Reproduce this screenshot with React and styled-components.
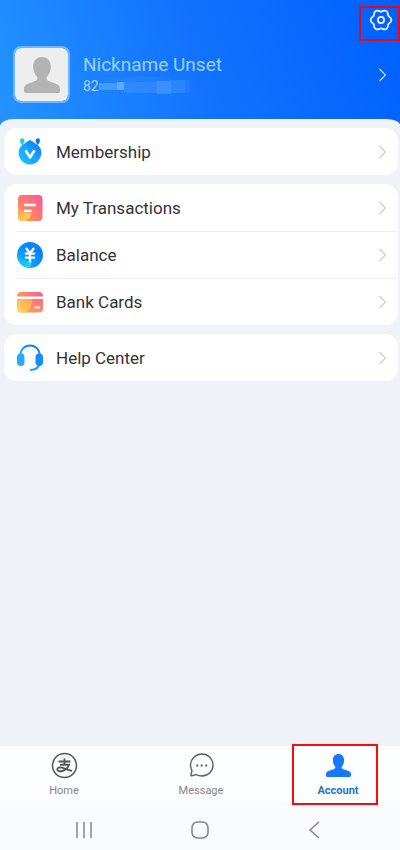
import * as React from "react";
import styled, { createGlobalStyle } from "styled-components";

const GlobalStyle = createGlobalStyle`
  * {
    box-sizing: border-box;
  }

  body {
    margin: 0;
    background: #eff3f8;
    font-family: Roboto, "Noto Sans", sans-serif;
  }

  button {
    border: 0;
    padding: 0;
    background: none;
    font-family: inherit;
    cursor: pointer;
  }

  svg {
    display: block;
    flex: none;
  }
`;

const Page = styled.div`
  display: flex;
  flex-direction: column;
  min-height: 100vh;
`;

const Header = styled.header`
  padding-bottom: 32px;
  background: linear-gradient(70deg, #2494ff 0%, #1272ff 50%, #0060ff 100%);
`;

const TopBar = styled.div`
  display: flex;
  justify-content: flex-end;
  height: 46px;
  padding: 8px 7px 0 0;
`;

const SettingsButton = styled.button`
  position: relative;
  width: 24px;
  height: 24px;
`;

const Callout = styled.span`
  position: absolute;
  border: 2px solid ${(props) => props.$color};
  pointer-events: none;
`;

const SettingsCallout = styled(Callout)`
  inset: -2px -7px -9px -10px;
`;

const TabCallout = styled(Callout)`
  inset: -2px 5px -2px -1px;
`;

const Profile = styled.button`
  display: flex;
  align-items: center;
  width: 100%;
  padding: 0 12px 0 13px;
  text-align: left;
`;

const Avatar = styled.span`
  display: flex;
  align-items: center;
  justify-content: center;
  width: 57px;
  height: 57px;
  border: 2px solid #70b7ff;
  border-radius: 8px;
  background: #eeeeee;
  background-clip: padding-box;
`;

const ProfileText = styled.span`
  display: flex;
  flex: 1;
  flex-direction: column;
  margin-left: 13px;
  padding-bottom: 2px;
`;

const Nickname = styled.span`
  font-size: 19px;
  line-height: 24px;
  color: #9dcfff;
`;

const Phone = styled.span`
  display: flex;
  align-items: center;
  font-size: 14px;
  line-height: 18px;
  color: #a8d3ff;
`;

const Panel = styled.main`
  display: flex;
  flex: 1;
  flex-direction: column;
  gap: 9px;
  margin-top: -16px;
  padding: 9px 2px 9px 4px;
  border-radius: 14px 14px 0 0 / 8px 6px 0 0;
  background: #eff3f8;
`;

const Card = styled.section`
  border-radius: 13px;
  background: #ffffff;
`;

const Row = styled.button`
  display: flex;
  align-items: center;
  width: 100%;
  height: 47px;
  padding: 0 10px 0 12px;
`;

const Divider = styled.hr`
  height: 1px;
  margin: 0 0 -1px 13px;
  border: 0;
  background: #eeeff1;
`;

const RowLabel = styled.span`
  flex: 1;
  margin-left: 12px;
  font-size: 17px;
  line-height: 24px;
  text-align: left;
  color: #333333;
`;

const TabBar = styled.nav`
  display: flex;
  justify-content: space-between;
  padding: 0 17px 0 19px;
  background: #fcfdff;
`;

const Tab = styled.button`
  position: relative;
  display: flex;
  flex-direction: column;
  align-items: center;
  gap: 4px;
  width: 90px;
  height: 57px;
  padding-top: 6px;
  font-size: 11px;
  font-weight: ${(props) => (props.$active ? 700 : 400)};
  line-height: 16px;
  color: ${(props) => (props.$active ? "#1b78c4" : "#858585")};
`;

const SystemBar = styled.div`
  display: flex;
  align-items: center;
  justify-content: space-between;
  height: 47px;
  padding: 6px 73px 0 72px;
  background: #f9fbff;
`;

const SystemButton = styled.button`
  width: 24px;
  height: 24px;
`;

function GearIcon() {
  return (
    <svg width="24" height="24" viewBox="0 0 24 24" fill="none" stroke="#eaf4ff" strokeWidth="1.8" strokeLinejoin="round">
      <path d="M22.4 12C22.4 9.400 20 9 19.300 7.800C18.600 6.600 19.600 4.300 17.300 3C15 1.700 13.400 3.600 12 3.600C10.600 3.600 9 1.700 6.700 3C4.400 4.300 5.400 6.600 4.700 7.800C4 9 1.600 9.400 1.600 12C1.600 14.600 4 15 4.700 16.200C5.400 17.400 4.400 19.700 6.700 21C9 22.300 10.600 20.400 12 20.400C13.400 20.400 15 22.300 17.300 21C19.600 19.700 18.600 17.400 19.300 16.200C20 15 22.400 14.600 22.400 12z" />
      <circle cx="12" cy="12" r="3.100" />
    </svg>
  );
}

function Chevron({ color }) {
  return (
    <svg width="10" height="14" viewBox="0 0 10 14" fill="none" stroke={color} strokeWidth="1.100">
      <path d="M1.500 1l6 6-6 6" />
    </svg>
  );
}

function Person({ color, width, height }) {
  return (
    <svg width={width} height={height} viewBox="0 0 36 36" preserveAspectRatio="none" fill={color}>
      <path d="M18 0c5.300 0 8.800 4 8.800 9.600 0 5.200-2.200 8.200-3.900 10.400-1 1.400-.2 3 1.300 3.800l8.100 3.300c2.600 1.100 3.700 2.400 3.700 4.600v2.600c0 1-.7 1.700-1.700 1.700H1.700C.7 36 0 35.300 0 34.300v-2.600c0-2.200 1.100-3.500 3.700-4.600l8.100-3.300c1.500-.8 2.300-2.400 1.300-3.800-1.700-2.200-3.900-5.200-3.900-10.400C9.200 4 12.700 0 18 0z" />
    </svg>
  );
}

// masked digits of the phone number
function MaskedDigits() {
  return (
    <svg width="92" height="18" viewBox="0 0 92 18">
      <path d="M0 6h18v7H0z" fill="#58a6ff" opacity=".7" />
      <path d="M18 5h7v8h-7z" fill="#7ebaff" opacity=".7" />
      <path d="M7 0h65v5H7z" fill="#2f8aff" opacity=".35" />
      <path d="M25 5h33v11H25z" fill="#4495ff" opacity=".5" />
      <path d="M58 4h14v13H58z" fill="#55a0ff" opacity=".6" />
      <path d="M72 3h14v13H72z" fill="#3e91ff" opacity=".55" />
      <path d="M86 3h5v13h-5z" fill="#2e86ff" opacity=".4" />
    </svg>
  );
}

function MembershipIcon() {
  return (
    <svg width="28" height="28" viewBox="0 0 28 28">
      <defs>
        <linearGradient id="member" x1="0" y1="1" x2="1" y2="0">
          <stop offset="0" stopColor="#14c8ff" />
          <stop offset=".5" stopColor="#16a4ff" />
          <stop offset="1" stopColor="#0875fa" />
        </linearGradient>
      </defs>
      <path d="M7.200 8C3.600 6.500 3 .300 6 .300c3.200 0 3 3.500 1.500 5z" fill="#1ccdf8" />
      <path d="M20.800 7c3.600-1 4.200-6.700 1.400-6.700-3 0-3.200 3-1.600 4.500z" fill="#0878ed" />
      <path d="M14 2c2.600 1.300 4.500 2.900 6.500 4.200 3 2 4.900 4.600 4.900 8.300 0 6.500-5.100 12-11.400 12S2.600 21 2.600 14.500c0-3.700 1.900-6.300 4.900-8.300C9.500 4.900 11.400 3.300 14 2z" fill="url(#member)" />
      <path d="M10 13l4 6.500 4-6.500" fill="none" stroke="#fff" strokeWidth="2.600" strokeLinecap="round" strokeLinejoin="round" />
    </svg>
  );
}

function TransactionsIcon() {
  return (
    <svg width="28" height="28" viewBox="0 0 28 28">
      <defs>
        <linearGradient id="bill" x1="0" y1="1" x2="1" y2="0">
          <stop offset="0" stopColor="#ffa445" />
          <stop offset=".5" stopColor="#ff7974" />
          <stop offset="1" stopColor="#ff5796" />
        </linearGradient>
        <linearGradient id="billCorner" x1="0" y1="0" x2="1" y2="1">
          <stop offset="0" stopColor="#ff9a58" />
          <stop offset="1" stopColor="#ffe052" />
        </linearGradient>
      </defs>
      <rect x="2" y="1" width="24.500" height="26" rx="4" fill="url(#bill)" />
      <path d="M2 13c2 4 8 7 13.500 6.500C14 24 11 27 8 27H6c-2.200 0-4-1.800-4-4z" fill="url(#billCorner)" />
      <path d="M9 11h10M9 17h5.500" stroke="#fff" strokeWidth="2.400" strokeLinecap="round" />
    </svg>
  );
}

function BalanceIcon() {
  return (
    <svg width="28" height="28" viewBox="0 0 28 28">
      <defs>
        <linearGradient id="coin" x1="0" y1="1" x2="1" y2="0">
          <stop offset="0" stopColor="#14b6ff" />
          <stop offset=".6" stopColor="#0c88fe" />
          <stop offset="1" stopColor="#0878fa" />
        </linearGradient>
        <linearGradient id="coinEdge" x1="0" y1="0" x2="1" y2="1">
          <stop offset="0" stopColor="#10a3ff" />
          <stop offset="1" stopColor="#1bdcff" />
        </linearGradient>
      </defs>
      <circle cx="14" cy="14" r="13" fill="url(#coin)" />
      <path d="M1.200 12C4 17 9 20.500 16 20c-.3 3-1 5-2.500 7C6 26.800.7 20.500 1.200 12z" fill="url(#coinEdge)" />
      <path d="M10.500 7.700l3.500 4.500 3.500-4.500M14 12.200v8.300M9.800 12.600h8.400M9.800 16.600h8.400" fill="none" stroke="#fff" strokeWidth="2.300" strokeLinecap="round" />
    </svg>
  );
}

function BankCardIcon() {
  return (
    <svg width="28" height="28" viewBox="0 0 28 28">
      <defs>
        <linearGradient id="cardTop" x1="0" y1="0" x2="1" y2="0">
          <stop offset="0" stopColor="#ff9660" />
          <stop offset="1" stopColor="#f95c8c" />
        </linearGradient>
        <linearGradient id="cardBody" x1="0" y1="1" x2="1" y2="0">
          <stop offset="0" stopColor="#ffac4b" />
          <stop offset="1" stopColor="#ff6a82" />
        </linearGradient>
        <linearGradient id="cardShine" x1="0" y1="1" x2="1" y2="0">
          <stop offset="0" stopColor="#ffe14c" />
          <stop offset="1" stopColor="#ff9a5e" />
        </linearGradient>
      </defs>
      <path d="M1 8.500C1 5.500 2.500 4 5 4h18c2.500 0 4 1.500 4 4.500z" fill="url(#cardTop)" />
      <path d="M1 11h26v9.500c0 2.500-1.500 4-4 4H5c-2.500 0-4-1.500-4-4z" fill="url(#cardBody)" />
      <path d="M1 11h15.500c-1 6.500-3 11-7 13.500H5c-2.500 0-4-1.500-4-4z" fill="url(#cardShine)" />
      <path d="M19.500 19.500H23" stroke="#fff" strokeWidth="2.200" strokeLinecap="round" />
    </svg>
  );
}

function HelpIcon() {
  return (
    <svg width="28" height="28" viewBox="0 0 28 28">
      <defs>
        <linearGradient id="phones" x1="0" y1="1" x2="1" y2="0">
          <stop offset="0" stopColor="#22b8ff" />
          <stop offset="1" stopColor="#0b7df8" />
        </linearGradient>
      </defs>
      <path d="M4.200 12C4.200 5.500 8.300 1.500 14 1.500s9.800 4 9.800 10.500M23.500 18c0 5-3.500 8-9.500 8" fill="none" stroke="url(#phones)" strokeWidth="1.900" />
      <rect x="1" y="9.500" width="7.500" height="12.500" rx="3.700" fill="#25acff" />
      <rect x="19.500" y="9.500" width="7.500" height="12.500" rx="3.700" fill="#128cff" />
    </svg>
  );
}

function HomeIcon() {
  return (
    <svg width="27" height="27" viewBox="0 0 27 27" fill="none" stroke="#555" strokeWidth="1.500">
      <circle cx="13.500" cy="13.500" r="12" />
      <path d="M7.500 9.500h12M13.500 6.500v6M9 12.700h9c-1 3-3.500 5.400-6.500 6.300-3 .8-5.200 0-5.200-1.600 0-1.700 2.200-2.400 4.700-1.700 3.200.9 6.200 2.700 10 3.200" strokeWidth="1.900" />
    </svg>
  );
}

function MessageIcon() {
  return (
    <svg width="27" height="27" viewBox="0 0 27 27">
      <path d="M14 2c6.300 0 11 4.800 11 11s-4.700 11-11 11c-2.300 0-4.300-.5-6-1.500l-4.500 1.300c-.5.100-.8-.3-.6-.8L4 18.800C3.100 17.100 2.500 15.200 2.500 13 2.500 6.800 7.700 2 14 2z" fill="none" stroke="#5f5f5f" strokeWidth="1.400" />
      <path d="M8.200 12.500h2v2h-2zM12.700 12.500h2v2h-2zM17.200 12.500h2v2h-2z" fill="#5f5f5f" />
    </svg>
  );
}

function AccountIcon() {
  return (
    <svg width="27" height="27" viewBox="0 0 27 27" fill="#1677ff">
      <path d="M13.500 2c3.400 0 5.600 2.500 5.600 6.200 0 3-.9 4.800-2.100 6.300-.8 1-.3 1.900.8 2.400l5.600 2c1.900.6 2.600 1.700 2.600 3.300v1.300c0 .9-.6 1.500-1.500 1.500h-22c-.9 0-1.500-.6-1.500-1.500v-1.300c0-1.600.7-2.700 2.600-3.300l5.600-2c1.100-.5 1.600-1.400.8-2.400-1.200-1.500-2.100-3.300-2.100-6.300C7.900 4.500 10.100 2 13.500 2z" />
    </svg>
  );
}

const groups = [
  [{ label: "Membership", Icon: MembershipIcon }],
  [
    { label: "My Transactions", Icon: TransactionsIcon },
    { label: "Balance", Icon: BalanceIcon },
    { label: "Bank Cards", Icon: BankCardIcon },
  ],
  [{ label: "Help Center", Icon: HelpIcon }],
];

const tabs = [
  { label: "Home", Icon: HomeIcon },
  { label: "Message", Icon: MessageIcon },
  { label: "Account", Icon: AccountIcon, active: true },
];

function App() {
  return (
    <Page>
      <GlobalStyle />

      <Header>
        <TopBar>
          <SettingsButton aria-label="Settings">
            <GearIcon />
            <SettingsCallout $color="#e00b22" />
          </SettingsButton>
        </TopBar>
        <Profile>
          <Avatar>
            <Person color="#b3b3b3" width="36" height="36" />
          </Avatar>
          <ProfileText>
            <Nickname>Nickname Unset</Nickname>
            <Phone>
              82
              <MaskedDigits />
            </Phone>
          </ProfileText>
          <Chevron color="#d3e6ff" />
        </Profile>
      </Header>

      <Panel>
        {groups.map((rows) => (
          <Card key={rows[0].label}>
            {rows.map(({ label, Icon }, index) => (
              <React.Fragment key={label}>
                {index > 0 && <Divider />}
                <Row>
                  <Icon />
                  <RowLabel>{label}</RowLabel>
                  <Chevron color="#cccccc" />
                </Row>
              </React.Fragment>
            ))}
          </Card>
        ))}
      </Panel>

      <TabBar>
        {tabs.map(({ label, Icon, active }) => (
          <Tab key={label} $active={active}>
            <Icon />
            {label}
            {active && <TabCallout $color="#fa0a0a" />}
          </Tab>
        ))}
      </TabBar>

      <SystemBar>
        <SystemButton aria-label="Recent apps">
          <svg width="24" height="24" viewBox="0 0 24 24" stroke="#858588" strokeWidth="1.500">
            <path d="M5 4v16M12 4v16M19 4v16" />
          </svg>
        </SystemButton>
        <SystemButton aria-label="Home screen">
          <svg width="24" height="24" viewBox="0 0 24 24" fill="none" stroke="#858588" strokeWidth="1.500">
            <rect x="4" y="4" width="16" height="16" rx="5.500" />
          </svg>
        </SystemButton>
        <SystemButton aria-label="Back">
          <svg width="24" height="24" viewBox="0 0 24 24" fill="none" stroke="#858588" strokeWidth="1.500">
            <path d="M16 4l-9 8 9 8" />
          </svg>
        </SystemButton>
      </SystemBar>
    </Page>
  );
}

export default App;
